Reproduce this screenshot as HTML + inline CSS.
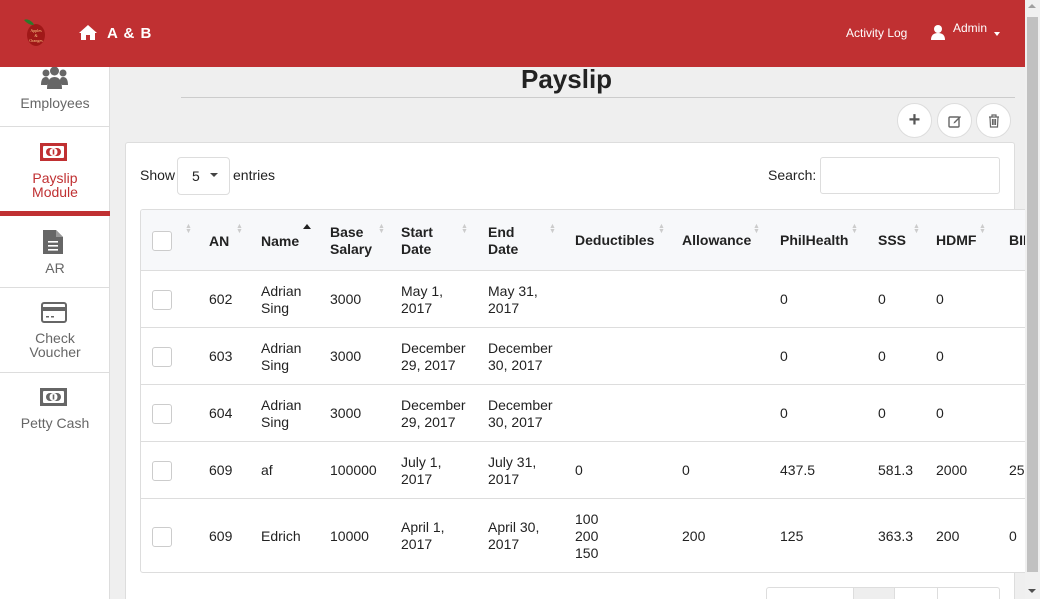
<!DOCTYPE html><html><head><style>
*{box-sizing:border-box;margin:0;padding:0}
html{width:1040px;height:599px;overflow:hidden}
body{width:1040px;height:599px;overflow:hidden;font-family:"Liberation Sans",sans-serif;background:#efefef;position:relative;color:#222;font-size:14px}
.top{position:absolute;left:0;top:0;width:1025px;height:67px;background:#c03032;color:#fff}
.side{position:absolute;left:0;top:67px;width:110px;height:532px;background:#fff;border-right:1px solid #ddd}
.si{position:absolute;left:0;width:110px;text-align:center;color:#666;font-size:14px;line-height:14px;border-bottom:1px solid #ddd}
.sb{position:absolute;right:0;top:0;width:15px;height:599px;background:#f0f0f0}
.card{position:absolute;left:125px;top:142px;width:890px;height:457px;background:#fff;border:1px solid #ddd;border-bottom:0;border-radius:3px 3px 0 0}
.tbl{position:absolute;left:140px;top:209px;width:900px;height:364px;border:1px solid #ddd;border-radius:3px;overflow:hidden;background:#fff}
.c{position:absolute;line-height:17px;font-size:14px}
.h{font-weight:bold}
.cb{position:absolute;left:11px;width:20px;height:20px;border:1px solid #ccc;border-radius:3px;background:#fff}
.rl{position:absolute;left:0;width:900px;border-top:1px solid #ddd}
.circ{position:absolute;top:103px;width:35px;height:35px;border-radius:50%;background:#fff;border:1px solid #ddd;text-align:center;line-height:33px;color:#555}
.ar{position:absolute;color:#ccc;font-size:7px;line-height:5px}
</style></head><body>
<div class="top">
<svg style="position:absolute;left:24px;top:17px" width="24" height="30" viewBox="0 0 24 30"><ellipse cx="12" cy="18" rx="9" ry="11" fill="#a01818"/><text x="12" y="15" font-size="4" fill="#fc8" text-anchor="middle" font-family="Liberation Serif">Apples</text><text x="12" y="20" font-size="4" fill="#fc8" text-anchor="middle" font-family="Liberation Serif">&amp;</text><text x="12" y="25" font-size="4" fill="#fc8" text-anchor="middle" font-family="Liberation Serif">Oranges</text><path d="M9 6 Q4 1 0 3 Q4 8 10 8Z" fill="#2a7a2a"/></svg>
<svg style="position:absolute;left:78px;top:24px" width="20" height="17" viewBox="0 0 20 17"><path d="M10 1 L19 9 L17 9 L17 16 L12 16 L12 11 L8 11 L8 16 L3 16 L3 9 L1 9Z" fill="#fff"/></svg>
<div style="position:absolute;left:107px;top:25px;font-weight:bold;font-size:15px;letter-spacing:1px">A &amp; B</div>
<div style="position:absolute;left:846px;top:26px;font-size:12px">Activity Log</div>
<svg style="position:absolute;left:931px;top:24px" width="14" height="16" viewBox="0 0 14 16"><circle cx="7" cy="5" r="4" fill="#fff"/><path d="M0 16 Q0 9 7 9 Q14 9 14 16Z" fill="#fff"/></svg>
<div style="position:absolute;left:953px;top:21px;font-size:12px">Admin</div>
<div style="position:absolute;left:994px;top:32px;border:3px solid transparent;border-top:4px solid #fff"></div>
</div>
<div class="side">
<div class="si" style="top:0;height:60px"><svg style="position:absolute;left:41px;top:0" width="27" height="22" viewBox="0 0 27 22"><circle cx="13.5" cy="4" r="4.5" fill="#666"/><circle cx="5" cy="6" r="3.5" fill="#666"/><circle cx="22" cy="6" r="3.5" fill="#666"/><path d="M6 22 Q6 10 13.5 10 Q21 10 21 22Z" fill="#666"/><path d="M0 18 Q0 10 5 10 Q8 10 8 14 L6 18Z M27 18 Q27 10 22 10 Q19 10 19 14 L21 18Z" fill="#666"/></svg><div style="position:absolute;top:29px;width:110px">Employees</div></div>
<div class="si" style="top:60px;height:85px;color:#c03032"><svg style="position:absolute;left:40px;top:16px" width="27" height="18" viewBox="0 0 27 18"><rect width="27" height="18" fill="#c03032"/><rect x="3" y="3" width="21" height="12" fill="#fff" rx="1"/><rect x="6" y="5" width="15" height="8" fill="#c03032" rx="4"/><circle cx="13.5" cy="9" r="4" fill="#fff"/><rect x="12.7" y="6.5" width="1.6" height="5" fill="#c03032"/></svg><div style="position:absolute;top:44px;width:110px">Payslip<br>Module</div></div>
<div style="position:absolute;left:0;top:144px;width:110px;height:5px;background:#c03032"></div>
<div class="si" style="top:149px;height:72px"><svg style="position:absolute;left:43px;top:14px" width="20" height="24" viewBox="0 0 20 24"><path d="M0 0 L13 0 L20 7 L20 24 L0 24Z" fill="#666"/><path d="M13 0 L13 7 L20 7" fill="#999"/><rect x="5" y="11" width="10" height="1.6" fill="#fff"/><rect x="5" y="15" width="10" height="1.6" fill="#fff"/><rect x="5" y="19" width="10" height="1.6" fill="#fff"/></svg><div style="position:absolute;top:45px;width:110px">AR</div></div>
<div class="si" style="top:221px;height:85px"><svg style="position:absolute;left:41px;top:14px" width="26" height="21" viewBox="0 0 26 21"><rect x="1" y="1" width="24" height="19" rx="2" fill="none" stroke="#666" stroke-width="2"/><rect x="1" y="5" width="24" height="4" fill="#666"/><rect x="5" y="14" width="3" height="1.5" fill="#666"/><rect x="10" y="14" width="3" height="1.5" fill="#666"/></svg><div style="position:absolute;top:43px;width:110px">Check<br>Voucher</div></div>
<div class="si" style="top:306px;height:80px;border:none"><svg style="position:absolute;left:40px;top:15px" width="27" height="18" viewBox="0 0 27 18"><rect width="27" height="18" fill="#666"/><rect x="3" y="3" width="21" height="12" fill="#fff" rx="1"/><rect x="6" y="5" width="15" height="8" fill="#666" rx="4"/><circle cx="13.5" cy="9" r="4" fill="#fff"/><rect x="12.7" y="6.5" width="1.6" height="5" fill="#666"/></svg><div style="position:absolute;top:43px;width:110px">Petty Cash</div></div>
</div>
<div style="position:absolute;left:521px;top:64px;font-size:26px;font-weight:bold">Payslip</div>
<div style="position:absolute;left:181px;top:97px;width:834px;border-top:1px solid #ccc"></div>
<div class="circ" style="left:897px;font-size:20px;font-weight:bold">+</div>
<div class="circ" style="left:937px"><svg width="14" height="14" viewBox="0 0 14 14" style="margin-top:10px"><rect x="1" y="3" width="10" height="10" rx="1" fill="none" stroke="#666" stroke-width="1.4"/><path d="M6 8 L12 2 L13 3 L7 9 L5.5 9.5Z" fill="#666"/></svg></div>
<div class="circ" style="left:976px"><svg width="12" height="14" viewBox="0 0 12 14" style="margin-top:10px"><path d="M1 3 H11 M4 3 V1 H8 V3 M2 3 L2.5 13 H9.5 L10 3 M4.5 5 V11 M6 5 V11 M7.5 5 V11" fill="none" stroke="#666" stroke-width="1.2"/></svg></div>
<div class="card"></div>
<div class="c" style="left:140px;top:167px">Show</div>
<div style="position:absolute;left:177px;top:157px;width:53px;height:38px;border:1px solid #ddd;border-radius:4px;background:#fff"><span style="position:absolute;left:14px;top:10px">5</span><span style="position:absolute;left:32px;top:15px;border:4px solid transparent;border-top:4px solid #444"></span></div>
<div class="c" style="left:233px;top:167px">entries</div>
<div class="c" style="left:768px;top:167px">Search:</div>
<div style="position:absolute;left:820px;top:157px;width:180px;height:37px;border:1px solid #ddd;border-radius:3px;background:#fff"></div>
<div class="tbl">
<div style="position:absolute;left:0;top:0;width:900px;height:61px;background:#f7f8fa"></div>
<div class="cb" style="top:21px"></div>
<div class="c h" style="left:68px;top:23px">AN</div>
<div class="c h" style="left:120px;top:23px">Name</div>
<div class="c h" style="left:189px;top:14px">Base<br>Salary</div>
<div class="c h" style="left:260px;top:14px">Start<br>Date</div>
<div class="c h" style="left:347px;top:14px">End<br>Date</div>
<div class="c h" style="left:434px;top:22px">Deductibles</div>
<div class="c h" style="left:541px;top:22px">Allowance</div>
<div class="c h" style="left:639px;top:22px">PhilHealth</div>
<div class="c h" style="left:737px;top:22px">SSS</div>
<div class="c h" style="left:795px;top:22px">HDMF</div>
<div class="c h" style="left:868px;top:22px">BIR</div>
<div class="ar" style="left:44px;top:14px">▲<br>▼</div><div class="ar" style="left:95px;top:14px">▲<br>▼</div>
<div style="position:absolute;left:162px;top:14px;border:4px solid transparent;border-bottom:5px solid #222;border-top:0"></div>
<div class="ar" style="left:237px;top:14px">▲<br>▼</div><div class="ar" style="left:320px;top:14px">▲<br>▼</div><div class="ar" style="left:408px;top:14px">▲<br>▼</div><div class="ar" style="left:517px;top:14px">▲<br>▼</div><div class="ar" style="left:612px;top:14px">▲<br>▼</div><div class="ar" style="left:710px;top:14px">▲<br>▼</div><div class="ar" style="left:772px;top:14px">▲<br>▼</div><div class="ar" style="left:838px;top:14px">▲<br>▼</div>
<div class="rl" style="top:60px"></div><div class="rl" style="top:117px"></div><div class="rl" style="top:174px"></div><div class="rl" style="top:231px"></div><div class="rl" style="top:288px"></div>
<div class="cb" style="top:80px"></div><div class="c" style="left:68px;top:81px">602</div><div class="c" style="left:120px;top:73px">Adrian<br>Sing</div><div class="c" style="left:189px;top:81px">3000</div><div class="c" style="left:260px;top:73px">May 1,<br>2017</div><div class="c" style="left:347px;top:73px">May 31,<br>2017</div><div class="c" style="left:639px;top:81px">0</div><div class="c" style="left:737px;top:81px">0</div><div class="c" style="left:795px;top:81px">0</div>
<div class="cb" style="top:137px"></div><div class="c" style="left:68px;top:138px">603</div><div class="c" style="left:120px;top:130px">Adrian<br>Sing</div><div class="c" style="left:189px;top:138px">3000</div><div class="c" style="left:260px;top:130px">December<br>29, 2017</div><div class="c" style="left:347px;top:130px">December<br>30, 2017</div><div class="c" style="left:639px;top:138px">0</div><div class="c" style="left:737px;top:138px">0</div><div class="c" style="left:795px;top:138px">0</div>
<div class="cb" style="top:194px"></div><div class="c" style="left:68px;top:195px">604</div><div class="c" style="left:120px;top:187px">Adrian<br>Sing</div><div class="c" style="left:189px;top:195px">3000</div><div class="c" style="left:260px;top:187px">December<br>29, 2017</div><div class="c" style="left:347px;top:187px">December<br>30, 2017</div><div class="c" style="left:639px;top:195px">0</div><div class="c" style="left:737px;top:195px">0</div><div class="c" style="left:795px;top:195px">0</div>
<div class="cb" style="top:251px"></div><div class="c" style="left:68px;top:252px">609</div><div class="c" style="left:120px;top:252px">af</div><div class="c" style="left:189px;top:252px">100000</div><div class="c" style="left:260px;top:244px">July 1,<br>2017</div><div class="c" style="left:347px;top:244px">July 31,<br>2017</div><div class="c" style="left:434px;top:252px">0</div><div class="c" style="left:541px;top:252px">0</div><div class="c" style="left:639px;top:252px">437.5</div><div class="c" style="left:737px;top:252px">581.3</div><div class="c" style="left:795px;top:252px">2000</div><div class="c" style="left:868px;top:252px">25</div>
<div class="cb" style="top:317px"></div><div class="c" style="left:68px;top:318px">609</div><div class="c" style="left:120px;top:318px">Edrich</div><div class="c" style="left:189px;top:318px">10000</div><div class="c" style="left:260px;top:309px">April 1,<br>2017</div><div class="c" style="left:347px;top:309px">April 30,<br>2017</div><div class="c" style="left:434px;top:301px">100<br>200<br>150</div><div class="c" style="left:541px;top:318px">200</div><div class="c" style="left:639px;top:318px">125</div><div class="c" style="left:737px;top:318px">363.3</div><div class="c" style="left:795px;top:318px">200</div><div class="c" style="left:868px;top:318px">0</div>
</div>
<div style="position:absolute;left:766px;top:587px;width:234px;height:12px;border:1px solid #ddd;border-bottom:0;border-radius:3px 3px 0 0;background:#fff"><div style="position:absolute;left:86px;top:0;width:42px;height:12px;background:#eee;border-left:1px solid #ddd;border-right:1px solid #ddd"></div><div style="position:absolute;left:170px;top:0;height:12px;border-left:1px solid #ddd"></div></div>
<div class="sb"><div style="position:absolute;left:2px;top:17px;width:11px;height:555px;background:#c1c1c1"></div><div style="position:absolute;left:3px;top:4px;border:4px solid transparent;border-bottom:4px solid #a0a0a0;border-top:0"></div><div style="position:absolute;left:3px;top:589px;border:4px solid transparent;border-top:4px solid #505050;border-bottom:0"></div></div>
</body></html>
